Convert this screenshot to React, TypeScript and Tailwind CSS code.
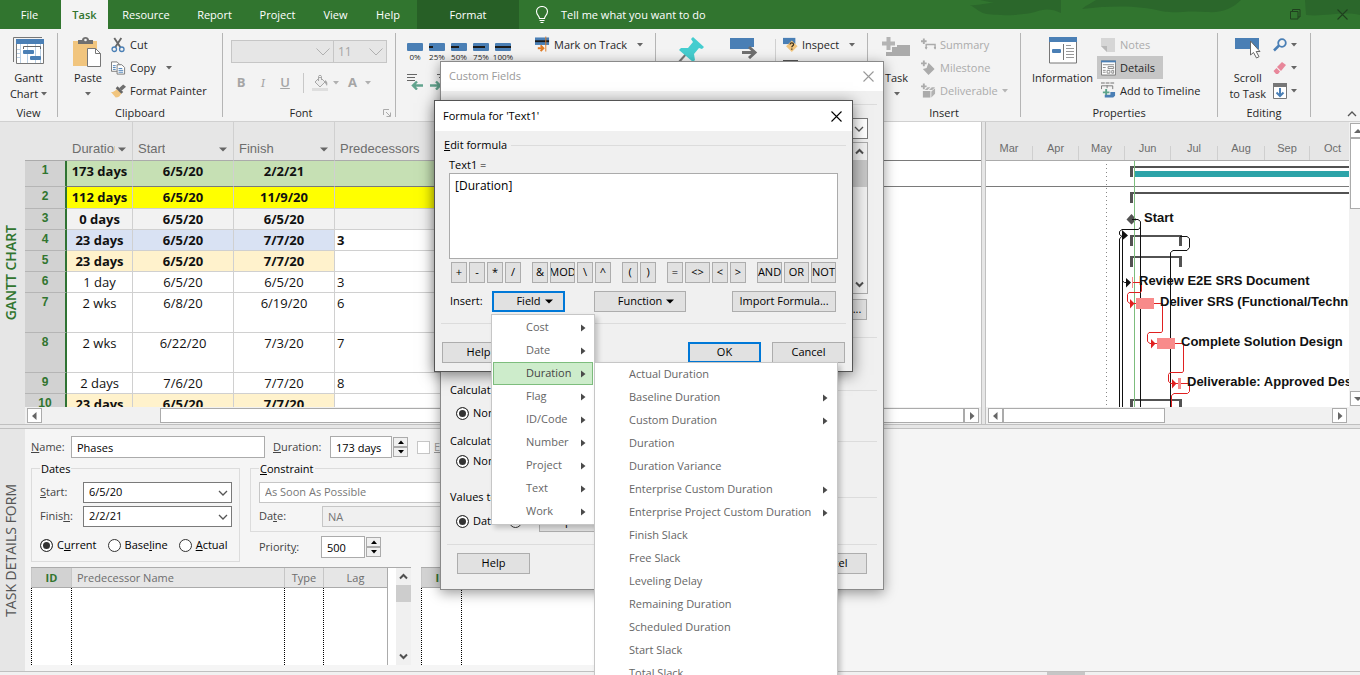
import type { ReactNode } from 'react';
import { clsx } from 'clsx';

interface TaskRow {
  id: number;
  duration: string;
  start: string;
  finish: string;
  predecessors?: string;
  height: string;
  fill: string;
  fillAll?: boolean;
  bold?: boolean;
}

const tabs = [
  { name: 'File', width: 'w-[59px]' },
  { name: 'Task', width: 'w-[47px]', active: true },
  { name: 'Resource', width: 'w-[76px]' },
  { name: 'Report', width: 'w-[61px]' },
  { name: 'Project', width: 'w-[65px]' },
  { name: 'View', width: 'w-[51px]' },
  { name: 'Help', width: 'w-[54px]' },
];

const rows: TaskRow[] = [
  { id: 1, duration: '173 days', start: '6/5/20', finish: '2/2/21', height: 'h-[26px]', fill: 'bg-[#c6e0b4]', fillAll: true, bold: true },
  { id: 2, duration: '112 days', start: '6/5/20', finish: '11/9/20', height: 'h-[22px]', fill: 'bg-[#ffff00]', fillAll: true, bold: true },
  { id: 3, duration: '0 days', start: '6/5/20', finish: '6/5/20', height: 'h-[21px]', fill: 'bg-[#f2f2f2]', fillAll: true, bold: true },
  { id: 4, duration: '23 days', start: '6/5/20', finish: '7/7/20', predecessors: '3', height: 'h-[21px]', fill: 'bg-[#d9e2f3]', bold: true },
  { id: 5, duration: '23 days', start: '6/5/20', finish: '7/7/20', height: 'h-[21px]', fill: 'bg-[#fff2cc]', bold: true },
  { id: 6, duration: '1 day', start: '6/5/20', finish: '6/5/20', predecessors: '3', height: 'h-[21px]', fill: 'bg-white' },
  { id: 7, duration: '2 wks', start: '6/8/20', finish: '6/19/20', predecessors: '6', height: 'h-[40px]', fill: 'bg-white' },
  { id: 8, duration: '2 wks', start: '6/22/20', finish: '7/3/20', predecessors: '7', height: 'h-[40px]', fill: 'bg-white' },
  { id: 9, duration: '2 days', start: '7/6/20', finish: '7/7/20', predecessors: '8', height: 'h-[21px]', fill: 'bg-white' },
  { id: 10, duration: '23 days', start: '6/5/20', finish: '7/7/20', height: 'h-[21px]', fill: 'bg-[#fff2cc]', bold: true },
];

const months = [
  { name: 'Mar', width: 'w-[47px]' },
  { name: 'Apr', width: 'w-[46px]' },
  { name: 'May', width: 'w-[46px]' },
  { name: 'Jun', width: 'w-[46px]' },
  { name: 'Jul', width: 'w-[47px]' },
  { name: 'Aug', width: 'w-[47px]' },
  { name: 'Sep', width: 'w-[45px]' },
  { name: 'Oct', width: 'w-[46px]' },
];

const operatorGroups = [
  ['+', '-', '*', '/'],
  ['&', 'MOD', '\\', '^'],
  ['(', ')'],
  ['=', '<>', '<', '>'],
  ['AND', 'OR', 'NOT'],
];

const fieldTypes = ['Cost', 'Date', 'Duration', 'Flag', 'ID/Code', 'Number', 'Project', 'Text', 'Work'];

const durationFields = [
  { name: 'Actual Duration' },
  { name: 'Baseline Duration', more: true },
  { name: 'Custom Duration', more: true },
  { name: 'Duration' },
  { name: 'Duration Variance' },
  { name: 'Enterprise Custom Duration', more: true },
  { name: 'Enterprise Project Custom Duration', more: true },
  { name: 'Finish Slack' },
  { name: 'Free Slack' },
  { name: 'Leveling Delay' },
  { name: 'Remaining Duration' },
  { name: 'Scheduled Duration' },
  { name: 'Start Slack' },
  { name: 'Total Slack' },
];

function Caret({ className = 'text-[#666]' }: { className?: string }) {
  return (
    <svg width="6" height="4" viewBox="0 0 6 4" className={clsx('shrink-0', className)} aria-hidden="true">
      <path d="M0 0h6L3 3.5z" fill="currentColor" />
    </svg>
  );
}

function LargeCaret({ className }: { className: string }) {
  return (
    <svg width="8" height="5" viewBox="0 0 8 5" className={clsx('shrink-0', className)} aria-hidden="true">
      <path d="M0 0.500h8L4 4.500z" fill="currentColor" />
    </svg>
  );
}

function MenuArrow() {
  return (
    <svg width="5" height="8" viewBox="0 0 5 8" className="shrink-0 text-[#4a4a4a]" aria-hidden="true">
      <path d="M0 0.500v7L4.500 4z" fill="currentColor" />
    </svg>
  );
}

function Chevron({ up, className }: { up?: boolean; className?: string }) {
  return (
    <svg width="10" height="6" viewBox="0 0 10 6" className={clsx('pointer-events-none shrink-0', className)} aria-hidden="true">
      <path d={up ? 'M1 5l4-4 4 4' : 'M1 1l4 4 4-4'} fill="none" stroke="currentColor" strokeWidth="1.300" />
    </svg>
  );
}

function WideChevron({ className }: { className: string }) {
  return (
    <svg width="14" height="8" viewBox="0 0 14 8" className={clsx('pointer-events-none', className)} aria-hidden="true">
      <path d="M0.500 0.500L7 7l6.500-6.500" fill="none" stroke="currentColor" />
    </svg>
  );
}

// Thicker arrow heads for the scroll bars of lists
function ScrollArrow({ up, className }: { up?: boolean; className?: string }) {
  return (
    <svg width="9" height="7" viewBox="0 0 9 7" className={clsx('shrink-0 text-[#505050]', className)} aria-hidden="true">
      <path d={up ? 'M1 5.500L4.500 2 8 5.500' : 'M1 1.500L4.500 5 8 1.500'} fill="none" stroke="currentColor" strokeWidth="2" />
    </svg>
  );
}

function CloseIcon() {
  return (
    <svg width="11" height="11" viewBox="0 0 11 11" aria-hidden="true">
      <path d="M0.500 0.500l10 10M10.500 0.500l-10 10" stroke="currentColor" strokeWidth="1.100" />
    </svg>
  );
}

function GanttIcon() {
  return (
    <svg width="32" height="28" viewBox="0 0 32 28" aria-hidden="true">
      <path d="M0.500 25V0.500H29" fill="none" stroke="#777" />
      <path d="M3.500 2.500h27v24h-27z" fill="#fff" stroke="#777" />
      <path d="M3 2h28v5H3z" fill="#4a7fb5" />
      <path d="M4 12.500h4M4 16.500h4M4 20.500h4M7.500 7v19M14.500 7v19M22.500 7v19M27.500 7v19" stroke="#b9cfe4" />
      <path d="M10.500 12V9.500h17V12" fill="none" stroke="#666" />
      <rect x="10" y="13" width="11" height="4" rx="1" fill="#4a7fb5" />
      <rect x="17" y="19" width="11" height="4" rx="1" fill="#4a7fb5" />
    </svg>
  );
}

function PasteIcon() {
  return (
    <svg width="30" height="32" viewBox="0 0 30 32" aria-hidden="true">
      <path d="M0 4h24v25H0z" fill="#f1c57e" />
      <path d="M5 7V3h4c0-4 7-4 7 0h4v4z" fill="#6f6f6f" />
      <circle cx="12.500" cy="3" r="1.300" fill="#f3f3f3" />
      <path d="M14.500 11.500h8l5 5v13h-13z" fill="#fff" stroke="#777" />
      <path d="M22.500 11.500v5h5" fill="none" stroke="#777" />
    </svg>
  );
}

function CutIcon() {
  return (
    <svg width="16" height="16" viewBox="0 0 16 16" aria-hidden="true">
      <path d="M3.500 0.500L10 10.500M11 0.500L4.500 10.500" stroke="#666" strokeWidth="2" fill="none" />
      <circle cx="3.500" cy="12.500" r="2.400" fill="none" stroke="#4a7fb5" strokeWidth="1.400" />
      <circle cx="11.500" cy="12.500" r="2.400" fill="none" stroke="#4a7fb5" strokeWidth="1.400" />
    </svg>
  );
}

function CopyIcon() {
  return (
    <svg width="16" height="16" viewBox="0 0 16 16" aria-hidden="true">
      <path d="M0.500 1.500h6l3 3v7h-9z" fill="#fff" stroke="#777" />
      <path d="M2 5.500h3M2 7.500h3M2 9.500h3" stroke="#4a7fb5" />
      <path d="M6.500 4.500h5l3 3v7h-8z" fill="#fff" stroke="#777" />
      <path d="M8 8.500h4M8 10.500h5M8 12.500h5" stroke="#4a7fb5" />
    </svg>
  );
}

function PainterIcon() {
  return (
    <svg width="16" height="16" viewBox="0 0 16 16" aria-hidden="true">
      <path d="M0 9c3 0 4-1 6-3l5 4c-1 3-3 5-6 5z" fill="#f1c57e" />
      <path d="M5 5l2-2 6 6-2 2z" fill="#666" />
      <path d="M8.500 5L13 1l3 2.500-4.500 4z" fill="#6f6f6f" />
    </svg>
  );
}

function FillIcon() {
  return (
    <svg width="16" height="17" viewBox="0 0 16 17" aria-hidden="true">
      <path d="M3 7l5-5 5 5-5 5z" fill="#ececec" stroke="#a8a8a8" />
      <path d="M6.500 6V1.500c0-1.500 3-1.500 3 0V5" fill="none" stroke="#a8a8a8" />
      <path d="M13 5c2 1 3 3 2 6l-2-3z" fill="#a8a8a8" />
      <path d="M0 13h16v3H0z" fill="#dedede" />
    </svg>
  );
}

function PercentIcon({ done }: { done: number }) {
  return (
    <svg width="16" height="8" viewBox="0 0 16 8" aria-hidden="true">
      <rect width="16" height="8" rx="1" fill="#4a7fb5" />
      {done > 0 && <path d={`M0 4h${done * 0.16}`} stroke="#1a1a1a" strokeWidth="2" />}
    </svg>
  );
}

function IndentIcon({ right }: { right?: boolean }) {
  return (
    <svg width="17" height="16" viewBox="0 0 17 16" aria-hidden="true">
      {right ? (
        <>
          <path d="M7 0.500h10M9 3.500h8M11 6.500h6" stroke="#666" />
          <path d="M0 11.500h10M6 7.500l4 4-4 4" fill="none" stroke="#62a48e" strokeWidth="2.400" />
        </>
      ) : (
        <>
          <path d="M0 0.500h10M0 3.500h8M0 6.500h8" stroke="#666" />
          <path d="M16 11.500H6M10 7.500l-4 4 4 4" fill="none" stroke="#62a48e" strokeWidth="2.400" />
        </>
      )}
    </svg>
  );
}

function TrackIcon() {
  return (
    <svg width="16" height="17" viewBox="0 0 16 17" aria-hidden="true">
      <path d="M0 1h15v8H0z" fill="#4a7fb5" />
      <path d="M0 5h15" stroke="#1a1a1a" strokeWidth="2" />
      <path d="M11.500 0v16" stroke="#e07b24" />
      <path d="M3 12.500h6M6 9.500l3 3-3 3" fill="none" stroke="#e07b24" strokeWidth="2" />
    </svg>
  );
}

function PinIcon() {
  return (
    <svg width="28" height="26" viewBox="0 0 28 26" aria-hidden="true">
      <path d="M9 16l-8 9" stroke="#777" strokeWidth="2" />
      <path d="M15 0l11 10-2 2-3-1-5 6 1 6-2 2L1 13l2-2 7 0 5-6-2-3z" fill="#45cdcf" />
    </svg>
  );
}

function AutoScheduleIcon() {
  return (
    <svg width="29" height="22" viewBox="0 0 29 22" aria-hidden="true">
      <path d="M0 1h24v9h-5v2H0z" fill="#4a7fb5" />
      <path d="M12 15.500h13M19 10l6 5.500-6 5.500" fill="none" stroke="#6f6f6f" strokeWidth="3" />
    </svg>
  );
}

function InspectIcon() {
  return (
    <svg width="17" height="17" viewBox="0 0 17 17" aria-hidden="true">
      <path d="M0 1h14v7H0z" fill="#4a7fb5" />
      <path d="M10 4l6.500 6.500L10 17l-6.500-6.500z" fill="#f1c57e" />
      <path d="M8 8.500c0-2.500 4-2.500 4 0 0 1.500-2 1.500-2 3M10 13v1.500" fill="none" stroke="#3a3020" strokeWidth="1.400" />
    </svg>
  );
}

function NewTaskIcon() {
  return (
    <svg width="29" height="20" viewBox="0 0 29 20" aria-hidden="true">
      <path d="M6.500 0v13M0 6.500h13" stroke="#b4b4b4" strokeWidth="4" />
      <path d="M15 8h13v11H4v-4h6v-5h5z" fill="#ababab" />
    </svg>
  );
}

function SummaryIcon() {
  return (
    <svg width="16" height="16" viewBox="0 0 16 16" aria-hidden="true">
      <path d="M3 1v6M0 4h6" stroke="#ababab" strokeWidth="2" />
      <path d="M5.500 12V7.500H15V12" fill="none" stroke="#ababab" strokeWidth="1.500" />
      <path d="M4 10h3l-1.500 3zM13.500 10h3L15 13z" fill="#ababab" />
    </svg>
  );
}

function MilestoneIcon() {
  return (
    <svg width="16" height="16" viewBox="0 0 16 16" aria-hidden="true">
      <path d="M3 0v6M0 3h6" stroke="#ababab" strokeWidth="2" />
      <path d="M8 2.500l6.500 6.500L8 15.500 2 9l4-1z" fill="#ababab" />
    </svg>
  );
}

function DeliverableIcon() {
  return (
    <svg width="16" height="16" viewBox="0 0 16 16" aria-hidden="true">
      <path d="M3 0v6M0 3h6" stroke="#ababab" strokeWidth="2" />
      <path d="M2 8h8v7H2z" fill="#ababab" />
      <path d="M7 4h3L7 7H4zM11.500 4H15l-3 3H8.500zM11 8.500L15 5v6l-4 4z" fill="#b2b2b2" />
    </svg>
  );
}

function InformationIcon() {
  return (
    <svg width="28" height="27" viewBox="0 0 28 27" aria-hidden="true">
      <path d="M0.500 0.500h27v25.500H0.500z" fill="#fff" stroke="#777" />
      <path d="M0 0h28v5H0z" fill="#4a7fb5" />
      <path d="M14.500 7v16" stroke="#777" />
      <rect x="3" y="12" width="9" height="4" rx="1" fill="#4a7fb5" />
      <path d="M17 8.500h5M17 11.500h8M17 14.500h8M17 17.500h8M17 20.500h8" stroke="#999" />
    </svg>
  );
}

function NotesIcon() {
  return (
    <svg width="15" height="14" viewBox="0 0 15 14" aria-hidden="true">
      <path d="M0 0h14v14H6L0 8z" fill="#d6d6d6" />
      <path d="M0 8h6v6z" fill="#b8b8b8" />
    </svg>
  );
}

function DetailsIcon() {
  return (
    <svg width="16" height="16" viewBox="0 0 16 16" aria-hidden="true">
      <path d="M0.500 0.500h15v15H0.500z" fill="#fff" stroke="#777" />
      <path d="M0 0h16v2H0z" fill="#4a7fb5" />
      <path d="M2 4.500h12M2 7.500h3M2 10.500h3M2 12.500h3" stroke="#888" />
      <path d="M7.500 6.500h6v2h-6zM6.500 10.500h3v3h-3zM11.500 10.500h2v3h-2z" fill="none" stroke="#888" />
    </svg>
  );
}

function TimelineIcon() {
  return (
    <svg width="16" height="17" viewBox="0 0 16 17" aria-hidden="true">
      <path d="M0 0.500h14" stroke="#666" strokeDasharray="4 1" />
      <path d="M0.500 7V3.500h12V7M6.500 3v3" fill="none" stroke="#777" />
      <path d="M5.500 7v7M2 10.500h7" stroke="#5ba38a" strokeWidth="2" />
      <path d="M10 10h5v4l-2 2H4v-3h6z" fill="#4a7fb5" />
    </svg>
  );
}

function ScrollIcon() {
  return (
    <svg width="27" height="24" viewBox="0 0 27 24" aria-hidden="true">
      <path d="M1 1h24v11H1z" fill="#4a7fb5" />
      <path d="M16.500 4v14l3-2.500 3 5.500 2.500-1.300-2.800-5.200H26z" fill="#fff" stroke="#666" />
    </svg>
  );
}

function FindIcon() {
  return (
    <svg width="14" height="14" viewBox="0 0 14 14" aria-hidden="true">
      <circle cx="9" cy="5" r="3.800" fill="none" stroke="#4a7fb5" strokeWidth="1.800" />
      <path d="M6 7.500L1 12.500" stroke="#4a7fb5" strokeWidth="2.500" />
    </svg>
  );
}

function EraserIcon() {
  return (
    <svg width="14" height="14" viewBox="0 0 14 14" aria-hidden="true">
      <path d="M9 1l4 3-5 6-4-4z" fill="#e8879a" />
      <path d="M3.500 7l3.500 3.500L5 13H3L0.500 10z" fill="#e8879a" />
    </svg>
  );
}

function FillDownIcon() {
  return (
    <svg width="14" height="16" viewBox="0 0 14 16" aria-hidden="true">
      <path d="M0.500 0.500h13v15H0.500z" fill="#fff" stroke="#777" />
      <path d="M0 0h14v4H0z" fill="#777" />
      <path d="M7 5v8M3.500 9.500L7 13l3.500-3.500" fill="none" stroke="#4a7fb5" strokeWidth="2" />
    </svg>
  );
}

function Divider() {
  return <div className="h-[84px] w-px shrink-0 bg-[#b5b5b5]" />;
}

function Group({ label, width, children }: { label: string; width: string; children: ReactNode }) {
  return (
    <section className={clsx('flex h-[88px] shrink-0 flex-col', width)} aria-label={label}>
      <div className="flex min-h-0 flex-1">{children}</div>
      <p className="text-center leading-4">{label}</p>
    </section>
  );
}

function SmallCommand({ icon, label, caret, disabled, pressed }: { icon: ReactNode; label?: string; caret?: boolean; disabled?: boolean; pressed?: boolean }) {
  return (
    <button
      type="button"
      disabled={disabled}
      className={clsx(
        'flex h-[23px] items-center gap-1 whitespace-nowrap px-1 leading-[21px]',
        disabled && 'text-[#ababab]',
        pressed && 'bg-[#c6c6c6] pr-2',
      )}
    >
      <span className="flex w-[15px] shrink-0 justify-center">{icon}</span>
      {label}
      {caret && <Caret className={clsx(label && !disabled && 'ml-[6px]', disabled ? 'text-[#b5b5b5]' : 'text-[#666]')} />}
    </button>
  );
}

function LargeCommand({ icon, lines, caret }: { icon: ReactNode; lines: string[]; caret?: boolean }) {
  return (
    <button type="button" className="flex flex-col items-center leading-4">
      <span className="flex h-[37px] items-start pt-1">{icon}</span>
      {lines.map((line, index) => (
        <span key={line} className="flex items-center gap-[3px] whitespace-nowrap">
          {line}
          {caret && lines.length > 1 && index === lines.length - 1 && <Caret />}
        </span>
      ))}
      {caret && lines.length === 1 && (
        <span className="flex h-4 items-center">
          <Caret />
        </span>
      )}
    </button>
  );
}

function TitleBar() {
  return (
    <header className="flex h-[29px] shrink-0 bg-[#31752f] text-[11px] leading-[28px] text-white">
      <nav className="flex shrink-0">
        {tabs.map((tab) => (
          <button
            key={tab.name}
            type="button"
            className={clsx(
              'box-content h-[29px] pb-px',
              tab.width,
              tab.name === 'File' && 'pr-[2px]',
              tab.name === 'Help' && 'pr-[2px]',
              tab.active && 'bg-[#f3f3f3] font-semibold text-[#31752f]',
            )}
          >
            {tab.name}
          </button>
        ))}
        <button type="button" className="h-[29px] w-[102px] bg-[#275f26]">
          Format
        </button>
      </nav>
      <button type="button" className="flex shrink-0 items-center gap-3 pl-4">
        <svg width="14" height="18" viewBox="0 0 14 18" aria-hidden="true">
          <path d="M4.500 12.500c0-2.500-3-3.500-3-7a5.500 5 0 0 1 11 0c0 3.500-3 4.500-3 7zM4.500 14.500h5M5.500 16.500h3" fill="none" stroke="#fff" strokeWidth="1.100" />
        </svg>
        Tell me what you want to do
      </button>
      <div className="relative flex flex-1 items-center justify-end">
        <svg width="400" height="29" viewBox="960 0 400 29" className="absolute right-0 top-0" aria-hidden="true">
          <path
            d="M970 5c8 1 14-2 24-2l-14-3h81v13c-10-5-18-4-26-1-14 4-44 4-52 1-6-3-8-5-13-8zM1082 9c4-4 10-6 14-9h145c-8 8-18 13-34 12-20-2-34 2-46-1-20-5-46-6-79-2zM1305 0h55v15c-18-4-36 2-54 0z"
            fill="#2b672b"
          />
        </svg>
        <div className="relative flex items-center gap-9 pr-3 text-[#20401f]">
          <button type="button" aria-label="Restore">
            <svg width="11" height="11" viewBox="0 0 11 11" aria-hidden="true">
              <path d="M0.500 2.500h7.500v7.500H0.500zM2.500 2.500v-2h7.500V8H8" fill="none" stroke="currentColor" />
            </svg>
          </button>
          <button type="button" aria-label="Close">
            <CloseIcon />
          </button>
        </div>
      </div>
    </header>
  );
}

function Ribbon() {
  return (
    <div className="flex h-[93px] shrink-0 border-b border-[#d0d0d0] bg-[#f3f3f3] pt-1 text-[11px] text-[#262626]">
      <Group label="View" width="w-[57px]">
        <div className="flex flex-1 justify-center">
          <LargeCommand icon={<GanttIcon />} lines={['Gantt', 'Chart']} caret />
        </div>
      </Group>
      <Divider />
      <Group label="Clipboard" width="w-[164px]">
        <div className="flex w-[49px] shrink-0 justify-end pr-1">
          <LargeCommand icon={<PasteIcon />} lines={['Paste']} caret />
        </div>
        <div className="flex flex-col items-start">
          <SmallCommand icon={<CutIcon />} label="Cut" />
          <SmallCommand icon={<CopyIcon />} label="Copy" caret />
          <SmallCommand icon={<PainterIcon />} label="Format Painter" />
        </div>
      </Group>
      <Divider />
      <section className="flex h-[88px] w-[172px] shrink-0 flex-col" aria-label="Font">
        <div className="flex flex-1 flex-col gap-2 px-2 pt-[7px] text-[#a5a5a5]">
          <div className="flex h-[23px] text-[12px]">
            <div className="relative w-[103px]">
              <select disabled aria-label="Font name" className="h-full w-full appearance-none border border-[#c6c6c6] bg-[#e6e6e6]" />
              <WideChevron className="absolute right-1 top-2 text-[#b0b0b0]" />
            </div>
            <div className="relative -ml-px flex-1">
              <select disabled aria-label="Font size" className="h-full w-full appearance-none border border-[#c6c6c6] bg-[#e6e6e6] pl-1">
                <option>11</option>
              </select>
              <WideChevron className="absolute right-1 top-2 text-[#b0b0b0]" />
            </div>
          </div>
          <div className="flex h-6 items-center text-[13px]">
            <button type="button" disabled className="w-5 font-bold">B</button>
            <button type="button" disabled className="ml-[2px] w-5 font-serif italic">I</button>
            <button type="button" disabled className="ml-[2px] w-5 font-semibold underline">U</button>
            <span className="ml-2 h-5 w-px bg-[#c8c8c8]" />
            <button type="button" disabled aria-label="Background colour" className="ml-2 flex items-center gap-[5px]">
              <FillIcon />
              <Caret className="text-[#b0b0b0]" />
            </button>
            <button type="button" disabled className="ml-[9px] flex items-center gap-2 font-bold">
              A
              <Caret className="text-[#b0b0b0]" />
            </button>
          </div>
        </div>
        <p className="relative text-center leading-4">
          <span className="pr-4">Font</span>
          <svg width="8" height="8" viewBox="0 0 8 8" className="absolute right-1 top-1" aria-hidden="true">
            <path d="M0.500 6V0.500H6M3 3l4 4M7.500 3.500v4h-4" fill="none" stroke="#aaa" />
          </svg>
        </p>
      </section>
      <Divider />
      <Group label="Schedule" width="w-[259px]">
        <div className="flex w-[131px] flex-col gap-3 pl-[11px] pt-[10px]">
          <div className="flex gap-[6px]">
            {[0, 25, 50, 75, 100].map((done) => (
              <button key={done} type="button" className="flex w-4 flex-col items-center">
                <PercentIcon done={done} />
                <span className="text-[8px] leading-[11px]">{done}%</span>
              </button>
            ))}
          </div>
          <div className="flex gap-[6px]">
            <IndentIcon />
            <IndentIcon right />
          </div>
        </div>
        <div className="flex flex-col items-start pl-[4px]">
          <SmallCommand icon={<TrackIcon />} label="Mark on Track" caret />
          <SmallCommand icon={<span className="h-3 w-3 rounded bg-[#666]" />} label="Respect Links" />
        </div>
      </Group>
      <Divider />
      <Group label="Tasks" width="w-[211px]">
        <div className="flex w-[119px] gap-6 pl-[22px] pt-1">
          <PinIcon />
          <AutoScheduleIcon />
        </div>
        <div className="mt-[6px] w-px bg-[#d0d0d0]" />
        <div className="flex flex-col items-start pl-[3px]">
          <SmallCommand icon={<InspectIcon />} label="Inspect" caret />
          <SmallCommand icon={<span className="h-4 w-4 bg-[#555]" />} label="Move" caret />
        </div>
      </Group>
      <Divider />
      <Group label="Insert" width="w-[152px]">
        <div className="flex w-[49px] shrink-0 justify-center pl-2">
          <LargeCommand icon={<NewTaskIcon />} lines={['Task']} caret />
        </div>
        <div className="flex flex-col items-start">
          <SmallCommand icon={<SummaryIcon />} label="Summary" disabled />
          <SmallCommand icon={<MilestoneIcon />} label="Milestone" disabled />
          <SmallCommand icon={<DeliverableIcon />} label="Deliverable" caret disabled />
        </div>
      </Group>
      <Divider />
      <Group label="Properties" width="w-[196px]">
        <div className="flex w-[76px] shrink-0 justify-end pr-1">
          <LargeCommand icon={<InformationIcon />} lines={['Information']} />
        </div>
        <div className="flex flex-col items-start">
          <SmallCommand icon={<NotesIcon />} label="Notes" disabled />
          <SmallCommand icon={<DetailsIcon />} label="Details" pressed />
          <SmallCommand icon={<TimelineIcon />} label="Add to Timeline" />
        </div>
      </Group>
      <Divider />
      <Group label="Editing" width="w-[92px]">
        <div className="flex w-[50px] shrink-0 justify-end pr-[2px]">
          <LargeCommand icon={<ScrollIcon />} lines={['Scroll', 'to Task']} />
        </div>
        <div className="flex flex-col items-start">
          <SmallCommand icon={<FindIcon />} caret />
          <SmallCommand icon={<EraserIcon />} caret />
          <SmallCommand icon={<FillDownIcon />} caret />
        </div>
      </Group>
      <Divider />
      <div className="flex flex-1 items-end justify-end pb-1 pr-[3px]">
        <button type="button" aria-label="Collapse the ribbon">
          <Chevron up className="text-[#555]" />
        </button>
      </div>
    </div>
  );
}

function ScrollButton({ direction }: { direction: 'left' | 'right' | 'up' | 'down' }) {
  const paths = { left: 'M5.500 0v8L1 4z', right: 'M2 0v8L6.500 4z', up: 'M0 6h8L4 2z', down: 'M0 2h8L4 6z' };
  return (
    <button type="button" aria-label={`Scroll ${direction}`} className="flex size-[15px] shrink-0 items-center justify-center border border-[#ababab] bg-white">
      <svg width="8" height="8" viewBox="0 0 8 8" aria-hidden="true">
        <path d={paths[direction]} fill="#666" />
      </svg>
    </button>
  );
}

function TaskTable() {
  return (
    <div className="flex min-w-0 flex-1 flex-col">
      <div className="flex min-h-0 flex-1 overflow-hidden bg-white">
        <table className="h-fit w-[560px] shrink-0 table-fixed border-separate border-spacing-0 text-[#111]">
          <thead>
            <tr className="h-[39px] bg-[#e6e6e6] text-left align-bottom font-['Liberation_Sans'] text-[13px] leading-[18px] text-[#6d6d6d]">
              <th className="w-[42px] border-b border-[#ababab]" aria-label="Task ID" />
              {[
                { name: 'Duration', width: 'w-[66px]' },
                { name: 'Start', width: 'w-[101px]' },
                { name: 'Finish', width: 'w-[101px]' },
              ].map((column) => (
                <th key={column.name} className={clsx('h-[39px] border-b border-r border-b-[#ababab] border-r-[#d0d0d0] pb-[2px] pl-[5px] pr-[6px] font-normal', column.width)}>
                  <span className="flex items-center justify-between gap-[3px]">
                    <span className="min-w-0 overflow-hidden">{column.name}</span>
                    <LargeCaret className="text-[#666]" />
                  </span>
                </th>
              ))}
              <th className="border-b border-[#ababab] pb-[2px] pl-[5px] font-normal">Predecessors</th>
            </tr>
          </thead>
          <tbody className="align-top text-[13px] leading-5">
            {rows.map((row) => {
              const line = row.id === 1 ? 'border-b-[#7a7a7a]' : 'border-b-[#d0d0d0]';
              const cell = clsx('border-b border-r border-r-[#d0d0d0] text-center', line, row.fill);
              return (
                <tr key={row.id} className={clsx(row.height, row.bold && 'font-bold')}>
                  <th scope="row" className="border-b border-r-2 border-b-[#b5b5b5] border-r-[#2f7333] bg-[#d2d2d2] font-['Liberation_Sans'] text-[12px] leading-[18px] text-[#31752f]">
                    {row.id}
                  </th>
                  <td className={cell}>{row.duration}</td>
                  <td className={cell}>{row.start}</td>
                  <td className={cell}>{row.finish}</td>
                  <td className={clsx('border-b pl-[2px]', line, row.fillAll && row.fill)}>{row.predecessors}</td>
                </tr>
              );
            })}
          </tbody>
        </table>
        <div className="flex-1">
          <div className="h-[39px] border-b border-[#7a7a7a]" />
          <div className="h-[26px] border-b border-[#7a7a7a]" />
        </div>
      </div>
      <div className="flex h-[17px] shrink-0 items-center bg-[#f1f1f1] px-[2px]">
        <ScrollButton direction="left" />
        <div className="w-[118px]" />
        <div className="h-[15px] flex-1 border border-[#ababab] bg-white" />
        <ScrollButton direction="right" />
      </div>
    </div>
  );
}

function SummaryBar({ y, height = 11 }: { y: number; height?: number }) {
  return <path d={`M144 ${y}h52v${height}h-3v-${height - 2}h-46v${height - 2}h-3z`} fill="#525252" />;
}

function GanttBars() {
  return (
    <svg width="100%" height="100%" className="block" aria-label="Schedule bars">
      <rect x="0" y="25" width="100%" height="1" fill="#7a7a7a" />
      <path d="M120.500 3v300" stroke="#888" strokeDasharray="1 3" />

      <rect x="144" y="5" width="100%" height="2" fill="#525252" />
      <rect x="144" y="5" width="3" height="11" fill="#525252" />
      <rect x="148" y="10" width="100%" height="6" fill="#2ca3a8" />
      <rect x="144" y="31" width="100%" height="2" fill="#525252" />
      <rect x="144" y="31" width="3" height="11" fill="#525252" />
      <path d="M145.500 53l5 5.500-5 5-5-5z" fill="#525252" />
      <SummaryBar y={74} />
      <SummaryBar y={95} />
      <SummaryBar y={238} />
      <path d="M148.500 0v300" stroke="#7dbd7d" />

      <g fill="none" stroke="#111">
        <path d="M146 58.500h6l2.500 2V300M154.500 66l-2 2.500H136l-2.500 2v3l2.500 2" />
        <path d="M133.500 300V78l2-2.500M136.500 300V77" />
        <path d="M194 75.500h7l2.500 2v9l-2.500 3h-14l-2.500 2V300" />
        <path d="M136.500 118v2l2 1.500h3" />
      </g>
      <path d="M136 69l6 5.500-6 5zM140 117l5 4.500-5 5z" fill="#111" />

      <g fill="#f88a8a">
        <rect x="146" y="116" width="1" height="11" />
        <rect x="150" y="137" width="18" height="11" />
        <rect x="171" y="177" width="18" height="11" />
        <rect x="192" y="217" width="3" height="11" />
      </g>
      <g fill="none" stroke="#e02020">
        <path d="M147 121.500h8.500V130l-1 1.500H143l-1.500 2v7l2.500 2h6" />
        <path d="M168 142.500h8.500V170l-1 1.500H163l-1.500 2v7l2.500 2h7" />
        <path d="M189 182.500h8.500V210l-1 1.500H184l-1.500 2v7l2.500 2h7" />
        <path d="M195 222.500h8.500v8l-2 2H188l-2.500 2V300" />
      </g>
      <path d="M144 138l4.500 4.500-4.500 5zM165 178l4.500 4.500-4.500 5zM186 218l4.500 4.500-4.500 5z" fill="#e02020" />

      <g className="font-['Liberation_Sans'] text-[13px] font-bold" fill="#111">
        <text x="158" y="61">Start</text>
        <text x="153" y="124">Review E2E SRS Document</text>
        <text x="174" y="145">Deliver SRS (Functional/Technical)</text>
        <text x="195" y="185">Complete Solution Design</text>
        <text x="201" y="225">Deliverable: Approved Design</text>
      </g>
    </svg>
  );
}

function GanttChart() {
  return (
    <div className="flex w-[374px] shrink-0 bg-[#f1f1f1]">
      <div className="flex w-[363px] flex-col bg-white">
        <div className="flex h-[39px] shrink-0 items-end overflow-hidden border-b border-[#ababab] bg-[#e6e6e6] font-['Liberation_Sans'] text-[11px] text-[#6d6d6d]">
          {months.map((month) => (
            <div key={month.name} className={clsx('h-[14px] shrink-0 border-r border-[#cfcfcf] text-center', month.width)}>
              <span className="block leading-[4px]">{month.name}</span>
            </div>
          ))}
        </div>
        <div className="min-h-0 flex-1 overflow-hidden">
          <GanttBars />
        </div>
        <div className="flex h-[17px] shrink-0 items-center bg-[#f1f1f1] px-[2px]">
          <ScrollButton direction="left" />
          <div className="h-[15px] w-[162px] border border-[#ababab] bg-white" />
          <div className="flex-1" />
          <ScrollButton direction="right" />
        </div>
      </div>
      <div className="ml-px flex w-[10px] flex-col overflow-hidden pb-[18px] pt-px">
        <ScrollButton direction="up" />
        <div className="h-[71px] w-[15px] shrink-0 border border-[#ababab] bg-white" />
        <div className="flex-1" />
        <ScrollButton direction="down" />
      </div>
    </div>
  );
}

function SideLabel({ children, className }: { children: string; className: string }) {
  return (
    <div className="flex w-[25px] shrink-0 items-center justify-center bg-[#e6e6e6] pr-[3px]">
      <span className={clsx('rotate-180 whitespace-nowrap text-[14px] leading-5 [writing-mode:vertical-rl]', className)}>{children}</span>
    </div>
  );
}

function Spinner({ name }: { name: string }) {
  return (
    <div className="ml-px flex w-[15px] flex-col">
      {(['up', 'down'] as const).map((direction) => (
        <button
          key={direction}
          type="button"
          aria-label={`${name} ${direction}`}
          className="flex h-[10px] items-center justify-center border border-[#ababab] bg-[#f0f0f0]"
        >
          <Caret className={clsx('text-black', direction === 'up' && 'rotate-180')} />
        </button>
      ))}
    </div>
  );
}

function Radio({ id, name, checked, children }: { id: string; name: string; checked?: boolean; children?: ReactNode }) {
  return (
    <label htmlFor={id} className="flex items-center gap-1 whitespace-nowrap text-black">
      <input
        id={id}
        type="radio"
        name={name}
        defaultChecked={checked}
        className="size-[13px] shrink-0 appearance-none rounded-full border border-[#333] bg-white checked:bg-[#333] checked:shadow-[inset_0_0_0_2px_white]"
      />
      {children}
    </label>
  );
}

function DateBox({ id, value }: { id: string; value: string }) {
  return (
    <div className="relative w-[149px]">
      <select id={id} defaultValue={value} className="h-[21px] w-full appearance-none border border-[#7a7a7a] bg-white pl-[5px] text-black">
        <option>{value}</option>
      </select>
      <Chevron className="absolute right-1 top-2 text-[#555]" />
    </div>
  );
}

function DetailGrid({ columns }: { columns: { name: string; width: string; left?: boolean }[] }) {
  return (
    <div className="flex w-[380px] shrink-0 border-t border-[#ababab] bg-white">
      <table className="h-[97px] w-[356px] table-fixed border-separate border-spacing-0 border-r border-[#ababab]">
        <thead>
          <tr className="bg-[#e6e6e6] text-[#6d6d6d]">
            {columns.map((column, index) => (
              <th
                key={column.name}
                className={clsx(
                  'h-5 border-b border-l border-b-[#ababab] border-l-[#c6c6c6] leading-[18px]',
                  column.width,
                  index === 0 ? 'bg-[#d2d2d2] font-bold text-[#31752f]' : 'font-normal',
                  column.left ? 'pl-[5px] text-left' : 'text-center',
                )}
              >
                {column.name}
              </th>
            ))}
          </tr>
        </thead>
        <tbody>
          <tr>
            {columns.map((column) => (
              <td key={column.name} className="border-l border-dotted border-black" />
            ))}
          </tr>
        </tbody>
      </table>
      <div className="ml-2 flex w-[15px] flex-col items-center bg-[#f0f0f0] pb-[5px] pt-[5px]">
        <ScrollArrow up />
        <div className="mt-[5px] h-[17px] w-full bg-[#cdcdcd]" />
        <ScrollArrow className="mt-auto" />
      </div>
    </div>
  );
}

function TaskForm() {
  return (
    <form className="flex min-w-0 flex-1 flex-col gap-[5px] bg-[#f5f5f5] pb-[6px] pl-[6px] pt-[7px] text-[11px] text-[#444]">
      <div className="flex h-[22px] items-center">
        <label htmlFor="name" className="w-10">
          <u>N</u>ame:
        </label>
        <input id="name" defaultValue="Phases" className="h-[22px] w-[194px] border border-[#ababab] bg-white pl-[5px] text-black" />
        <label htmlFor="duration" className="ml-2 w-[57px]">
          <u>D</u>uration:
        </label>
        <input id="duration" defaultValue="173 days" className="h-[22px] w-[62px] border border-[#ababab] bg-white pl-[5px] text-black" />
        <Spinner name="Duration" />
        <label htmlFor="effort" className="ml-[9px] flex items-center gap-1 whitespace-nowrap text-[#999]">
          <input id="effort" type="checkbox" disabled className="size-[13px] appearance-none border border-[#c6c6c6] bg-white" />
          <span>
            <u>E</u>ffort driven
          </span>
        </label>
      </div>

      <div className="flex gap-[10px]">
        <fieldset className="h-[99px] w-[209px] border border-[#dcdcdc] pl-2">
          <legend className="px-px leading-[11px] text-black">Dates</legend>
          <div className="mt-2 flex h-[21px] items-center">
            <label htmlFor="start" className="w-[43px]">
              <u>S</u>tart:
            </label>
            <DateBox id="start" value="6/5/20" />
          </div>
          <div className="mt-[3px] flex h-[21px] items-center">
            <label htmlFor="finish" className="w-[43px]">
              Finis<u>h</u>:
            </label>
            <DateBox id="finish" value="2/2/21" />
          </div>
          <div className="mt-[10px] flex gap-[11px]">
            <Radio id="current" name="dates" checked>
              <span>C<u>u</u>rrent</span>
            </Radio>
            <Radio id="baseline" name="dates">
              <span>Base<u>l</u>ine</span>
            </Radio>
            <Radio id="actual" name="dates">
              <span><u>A</u>ctual</span>
            </Radio>
          </div>
        </fieldset>
        <div className="w-[420px]">
          <fieldset className="h-[69px] border border-[#dcdcdc] pl-2">
            <legend className="px-px leading-[11px] text-black">
              <u>C</u>onstraint
            </legend>
            <select disabled aria-label="Constraint" className="mt-2 block h-[21px] w-[390px] appearance-none border border-[#c6c6c6] bg-white pl-[5px] text-[#777]">
              <option>As Soon As Possible</option>
            </select>
            <div className="mt-[3px] flex h-[21px] items-center">
              <label htmlFor="date" className="w-[63px]">
                Da<u>t</u>e:
              </label>
              <input id="date" disabled defaultValue="NA" className="h-[21px] w-[200px] border border-[#c6c6c6] bg-[#f0f0f0] pl-[5px] text-[#777]" />
            </div>
          </fieldset>
          <div className="mt-[4px] flex h-[22px] items-center pl-[9px]">
            <label htmlFor="priority" className="w-[62px]">
              Priorit<u>y</u>:
            </label>
            <input id="priority" defaultValue="500" className="h-[22px] w-[44px] border border-[#ababab] bg-white pl-[5px] text-black" />
            <Spinner name="Priority" />
          </div>
        </div>
      </div>

      <div className="flex gap-[10px]">
        <DetailGrid
          columns={[
            { name: 'ID', width: 'w-[40px]' },
            { name: 'Predecessor Name', width: 'w-[213px]', left: true },
            { name: 'Type', width: 'w-[39px]' },
            { name: 'Lag', width: 'w-[64px]' },
          ]}
        />
        <DetailGrid
          columns={[
            { name: 'ID', width: 'w-[40px]' },
            { name: 'Resource Name', width: 'w-[213px]', left: true },
            { name: 'Units', width: 'w-[39px]' },
            { name: 'Work', width: 'w-[64px]' },
          ]}
        />
      </div>
    </form>
  );
}

function DialogButton({ children, className, primary }: { children: ReactNode; className: string; primary?: boolean }) {
  return (
    <button
      type="button"
      className={clsx(
        'flex h-[21px] shrink-0 items-center justify-center gap-1 overflow-hidden whitespace-nowrap bg-[#e1e1e1] text-black',
        primary ? 'border-2 border-[#0078d7]' : 'border border-[#adadad]',
        className,
      )}
    >
      {children}
    </button>
  );
}

function SectionTitle({ children }: { children?: ReactNode }) {
  return (
    <h3 className="flex h-4 items-center gap-1 whitespace-nowrap leading-[18px] text-black">
      {children}
      <span className="h-px flex-1 bg-[#dcdcdc]" />
    </h3>
  );
}

function CustomFieldsDialog() {
  return (
    <div role="dialog" aria-label="Custom Fields" className="absolute left-[440px] top-[61px] w-[444px] border border-[#8a8a8a] bg-[#f0f0f0] pb-[15px] text-[11px] shadow-[0_3px_12px_rgba(0,0,0,0.4)]">
      <div className="flex h-[29px] items-center justify-between bg-white pl-2 pr-[9px] text-[#999]">
        Custom Fields
        <button type="button" aria-label="Close Custom Fields">
          <CloseIcon />
        </button>
      </div>
      <div className="px-[6px] pt-[5px]">
        <SectionTitle>Field</SectionTitle>
        <div className="relative ml-[10px] mr-[9px] mt-[6px]">
          <select aria-label="Type" className="h-[21px] w-full appearance-none border border-[#7a7a7a] bg-white pl-1">
            <option>Text</option>
          </select>
          <Chevron className="absolute right-1 top-2 text-[#555]" />
        </div>
        <div className="ml-[10px] mr-[9px] mt-[3px] flex h-[152px] border border-[#ababab] bg-white">
          <div className="flex-1 pl-1">Text1</div>
          <div className="flex w-[15px] flex-col items-center bg-[#f0f0f0] py-[5px]">
            <ScrollArrow up />
            <div className="mt-[5px] h-[27px] w-full bg-[#c6c6c6]" />
            <ScrollArrow className="mt-auto" />
          </div>
        </div>
        <div className="mx-[10px] mt-[5px] flex justify-between">
          <DialogButton className="w-[73px]">Rename...</DialogButton>
          <DialogButton className="w-[82px]">Import Field...</DialogButton>
        </div>
        <div className="mt-[9px]">
          <SectionTitle />
        </div>
        <div className="mt-[37px] pl-[3px]">
          <SectionTitle>Calculation for task and group summary rows</SectionTitle>
          <div className="flex h-[27px] items-center pl-[6px] pt-1">
            <Radio id="summary-none" name="summary" checked>None</Radio>
          </div>
          <div className="mt-2">
            <SectionTitle>Calculation for assignment rows</SectionTitle>
          </div>
          <div className="flex h-[25px] items-center pl-[6px]">
            <Radio id="assignment-none" name="assignment" checked>None</Radio>
          </div>
          <div className="mt-[15px]">
            <SectionTitle>Values to display</SectionTitle>
          </div>
          <div className="mt-[5px] flex h-[22px] items-center pl-[6px]">
            <Radio id="data" name="values" checked>Data</Radio>
            <div className="ml-3 flex items-center gap-[17px]">
              <Radio id="graphical" name="values">
                <span className="sr-only">Graphical</span>
              </Radio>
              <DialogButton className="w-[126px]">Graphical Indicators...</DialogButton>
            </div>
          </div>
        </div>
        <div className="mt-1">
          <SectionTitle />
        </div>
        <div className="mx-[10px] flex justify-between pt-px">
          <DialogButton className="w-[73px]">Help</DialogButton>
          <DialogButton className="w-[73px]">Cancel</DialogButton>
        </div>
      </div>
    </div>
  );
}

function FormulaDialog() {
  return (
    <div role="dialog" aria-label="Formula for 'Text1'" className="absolute left-[434px] top-[100px] w-[419px] border border-[#555] bg-[#f0f0f0] pb-2 text-[11px] text-black shadow-[0_3px_14px_rgba(0,0,0,0.5)]">
      <div className="flex h-[30px] items-center justify-between bg-white pl-2 pr-[10px]">
        Formula for 'Text1'
        <button type="button" aria-label="Close formula">
          <CloseIcon />
        </button>
      </div>
      <div className="px-[6px] pt-[6px]">
        <div className="pl-[3px]">
          <SectionTitle>
            <span><u>E</u>dit formula</span>
          </SectionTitle>
        </div>
        <div className="px-2 pt-1">
          <label htmlFor="formula" className="block leading-4">Text1 =</label>
          <textarea id="formula" defaultValue="[Duration]" className="block h-[86px] w-full resize-none border border-[#ababab] bg-white px-[5px] py-1 text-[12px] leading-4" />
          <div className="mt-[3px] flex gap-[11px] pl-[2px]">
            {operatorGroups.map((group) => (
              <div key={group[0]} className="flex gap-[2px]">
                {group.map((operator) => (
                  <DialogButton key={operator} className={operator.length > 1 ? 'w-[25px]' : 'w-4'}>
                    {operator}
                  </DialogButton>
                ))}
              </div>
            ))}
          </div>
          <div className="mt-2 flex items-center pr-[2px]">
            <span className="w-[43px] pl-px">Insert:</span>
            <DialogButton primary className="w-[73px] pl-3">
              Field <LargeCaret className="text-black" />
            </DialogButton>
            <DialogButton className="ml-[29px] w-[92px] pl-3">
              Function <LargeCaret className="text-black" />
            </DialogButton>
            <DialogButton className="ml-auto w-[104px]">Import Formula...</DialogButton>
          </div>
        </div>
        <div className="mt-[11px] h-px bg-[#dcdcdc]" />
        <div className="mt-[18px] flex px-px">
          <DialogButton className="w-[73px]">Help</DialogButton>
          <DialogButton primary className="ml-auto w-[73px]">OK</DialogButton>
          <DialogButton className="ml-[11px] w-[73px]">Cancel</DialogButton>
        </div>
      </div>
    </div>
  );
}

function FieldMenu() {
  return (
    <ul role="menu" className="absolute left-[491px] top-[314px] w-[104px] border border-[#c6c6c6] bg-white p-px text-[11px] text-[#666] shadow-[3px_3px_5px_rgba(0,0,0,0.2)]">
      {fieldTypes.map((type) => (
        <li key={type} role="none">
          <button
            type="button"
            role="menuitem"
            className={clsx(
              'flex h-[23px] w-full items-center justify-between text-left',
              type === 'Duration' ? 'border border-[#7dbd7d] bg-[#cdeccb] pl-8 pr-[6px] text-[#444]' : 'pl-[33px] pr-[7px]',
            )}
          >
            {type}
            <MenuArrow />
          </button>
        </li>
      ))}
    </ul>
  );
}

function DurationMenu() {
  return (
    <ul role="menu" className="absolute left-[594px] top-[362px] w-[244px] border border-[#c6c6c6] bg-white text-[11px] text-[#666] shadow-[3px_3px_5px_rgba(0,0,0,0.2)]">
      {durationFields.map((field) => (
        <li key={field.name} role="none">
          <button type="button" role="menuitem" className="flex h-[23px] w-full items-center justify-between whitespace-nowrap pl-[34px] pr-[9px] text-left">
            {field.name}
            {field.more && <MenuArrow />}
          </button>
        </li>
      ))}
    </ul>
  );
}

export default function App() {
  return (
    <div className="relative flex h-screen flex-col overflow-hidden bg-[#e6e6e6] font-['Open_Sans','Noto_Sans',sans-serif]">
      <TitleBar />
      <Ribbon />
      <main className="flex min-h-0 flex-1 flex-col">
        <div className="flex min-h-0 flex-1 border-b border-[#c0c0c0]">
          <SideLabel className="font-semibold text-[#31752f]">GANTT CHART</SideLabel>
          <TaskTable />
          <div className="w-[5px] shrink-0 border-x border-[#c0c0c0] bg-[#e6e6e6]" />
          <GanttChart />
        </div>
        <div className="h-1 shrink-0 border-b border-[#c0c0c0]" />
        <div className="flex h-[242px] shrink-0">
          <SideLabel className="text-[#555]">TASK DETAILS FORM</SideLabel>
          <TaskForm />
        </div>
      </main>
      <footer className="flex h-1 shrink-0 justify-end border-t border-[#c0c0c0] bg-[#f1f1f1] pr-[275px]">
        <div className="w-[38px] bg-[#c6c6c6]" />
      </footer>
      <CustomFieldsDialog />
      <FormulaDialog />
      <FieldMenu />
      <DurationMenu />
    </div>
  );
}
